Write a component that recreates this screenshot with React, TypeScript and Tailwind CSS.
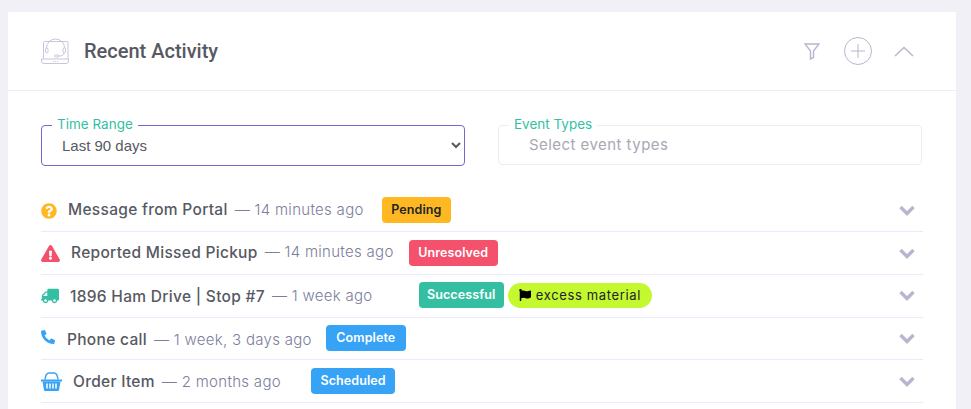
import { FaQuestionCircle, FaExclamationTriangle, FaTruck, FaPhoneAlt, FaFlag } from 'react-icons/fa'

const poppins = "font-['Inter',sans-serif]"

function HeadsetIcon() {
  return (
    <svg width="28" height="27" viewBox="0 0 28 27" fill="none" stroke="#c9c5dc" strokeWidth="1">
      <path d="M2.500 21V4.500a1 1 0 0 1 1-1H26a1 1 0 0 1 1 1V21" />
      <path d="M0.500 21H27.500V23a2.500 2.500 0 0 1-2.500 2.500H3A2.500 2.500 0 0 1 0.500 23Z" />
      <path d="M5.500 10V10a9 9 0 0 1 18 0V10" />
      <rect x="4.500" y="10" width="2.500" height="5" rx="1.200" />
      <rect x="22" y="10" width="2.500" height="5" rx="1.200" />
      <path d="M23 15c0 2-2 3-5 3" />
      <rect x="13.500" y="17" width="4.500" height="2" rx="1" />
      <path d="M12 23.500h1M14 23.500h1M16 23.500h1" />
    </svg>
  )
}

function FilterIcon() {
  return (
    <svg width="16" height="17" viewBox="0 0 16 17" fill="none" stroke="#b9b5d0" strokeWidth="1.400">
      <path d="M1 1H15L9.500 8V14.500L6.500 16V8Z" />
    </svg>
  )
}

function PlusCircleIcon() {
  return (
    <svg width="28" height="28" viewBox="0 0 28 28" fill="none" stroke="#b9b5d0" strokeWidth="1">
      <circle cx="14" cy="14" r="13.500" />
      <path d="M14 7V21M7 14H21" />
    </svg>
  )
}

function CaretUpIcon() {
  return (
    <svg width="20" height="11" viewBox="0 0 20 11" fill="none" stroke="#b9b5d0" strokeWidth="1.400">
      <path d="M1 10L10 1.500L19 10" />
    </svg>
  )
}

function RowChevron() {
  return (
    <svg width="16" height="11" viewBox="0 0 16 11" fill="none" stroke="#b9b5d0" strokeWidth="3.400">
      <path d="M1.500 2L8 8.500L14.500 2" />
    </svg>
  )
}

function BasketIcon() {
  return (
    <svg width="21" height="19" viewBox="0 0 21 19" fill="#36a3f7">
      <path d="M0 7.500H21V9.500H0Z" />
      <path d="M1.500 9.500H19.500L18 18a1 1 0 0 1-1 1H4a1 1 0 0 1-1-1Z" />
      <path d="M4 7.500C4.500 3 6 1 8 1H13C15 1 16.500 3 17 7.500" fill="none" stroke="#36a3f7" strokeWidth="1.500" />
      <path d="M6 11.500V16.500M9 11.500V16.500M12 11.500V16.500M15 11.500V16.500" stroke="#fff" strokeWidth="1.500" />
    </svg>
  )
}

type Row = {
  icon: React.ReactNode
  title: string
  time: string
  badge: string
  badgeClass: string
  titleGap: string
  badgeGap: string
  textShift: string
  flag?: boolean
}

const rows: Row[] = [
  {
    icon: <FaQuestionCircle size={16} color="#ffb822" />,
    title: 'Message from Portal',
    time: '14 minutes ago',
    badge: 'Pending',
    badgeClass: 'bg-[#ffb822] text-[#212529] px-[9.500px]',
    titleGap: 'ml-[11px]',
    badgeGap: 'ml-[18px]',
    textShift: '-mt-px',
  },
  {
    icon: <FaExclamationTriangle size={19} color="#f4516c" />,
    title: 'Reported Missed Pickup',
    time: '14 minutes ago',
    badge: 'Unresolved',
    badgeClass: 'bg-[#f4516c] text-white px-[9.500px]',
    titleGap: 'ml-[11px]',
    badgeGap: 'ml-[15px]',
    textShift: '-mt-px',
  },
  {
    icon: <FaTruck size={18} color="#34bfa3" className="-scale-x-100" />,
    title: '1896 Ham Drive | Stop #7',
    time: '1 week ago',
    badge: 'Successful',
    badgeClass: 'bg-[#34bfa3] text-white px-[8.500px]',
    titleGap: 'ml-[11px]',
    badgeGap: 'ml-[46px]',
    textShift: 'mt-px',
    flag: true,
  },
  {
    icon: <FaPhoneAlt size={14} color="#36a3f7" className="-mt-1" />,
    title: 'Phone call',
    time: '1 week, 3 days ago',
    badge: 'Complete',
    badgeClass: 'bg-[#36a3f7] text-white px-[10.500px]',
    titleGap: 'ml-[12px]',
    badgeGap: 'ml-[14px]',
    textShift: 'mt-[3px]',
  },
  {
    icon: <BasketIcon />,
    title: 'Order Item',
    time: '2 months ago',
    badge: 'Scheduled',
    badgeClass: 'bg-[#36a3f7] text-white px-[9.500px]',
    titleGap: 'ml-[11px]',
    badgeGap: 'ml-[30px]',
    textShift: 'mt-px',
  },
]

export default function App() {
  return (
    <div className={`h-[409px] overflow-hidden bg-[#f0f0f6] pl-2 pr-[15px] pt-3 ${poppins}`}>
      <div className="h-[500px] bg-white">
        <div className="flex h-[79px] items-center justify-between border-b border-[#ebedf2] pl-[33px] pr-[42px]">
          <div className="flex items-center gap-[15px]">
            <HeadsetIcon />
            <h3 className="font-['Roboto',sans-serif] text-[20px] font-medium text-[#575962]">Recent Activity</h3>
          </div>
          <div className="flex items-center">
            <FilterIcon />
            <span className="ml-[24px]"><PlusCircleIcon /></span>
            <span className="ml-[22px]"><CaretUpIcon /></span>
          </div>
        </div>

        <div className="px-[33px] pt-[34px]">
          <div className="flex gap-[33px]">
            <div className="relative w-[424px]">
              <label className="absolute left-[11px] top-[-9px] bg-white px-[5px] text-[13.500px] leading-[17px] text-[#34bfa3]">
                Time Range
              </label>
              <select className="h-[41px] w-full rounded-[4px] border border-[#716aca] bg-white pl-[16px] pr-1 font-['Liberation_Sans',sans-serif] text-[15px] text-[#575962] outline-none">
                <option>Last 90 days</option>
              </select>
            </div>
            <div className="relative w-[424px]">
              <label className="absolute left-[11px] top-[-9px] bg-white px-[5px] text-[13.500px] leading-[17px] text-[#34bfa3]">
                Event Types
              </label>
              <div className="flex h-[40px] items-center rounded-[4px] border border-[#ebedf2] pl-[30px] pt-px text-[15px] tracking-[0.45px] text-[#a8a8b3]">
                Select event types
              </div>
            </div>
          </div>

          <div className="mt-[23.700px]">
            {rows.map((row) => (
              <div key={row.title} className="flex h-[42.700px] items-center border-b border-[#ebe9fb]">
                <span className="flex items-center">{row.icon}</span>
                <span className={`${row.titleGap} ${row.textShift} text-[15.500px] font-medium tracking-[0.3px] text-[#575962]`}>{row.title}</span>
                <span className={`${row.textShift} ml-[7px] text-[15px] font-light tracking-[0.3px] text-[#7b7e9c]`}>— {row.time}</span>
                <span className={`${row.badgeGap} -mt-px rounded-[4px] py-[5px] text-[12.500px] leading-[16px] font-semibold tracking-[0.1px] ${row.badgeClass}`}>
                  {row.badge}
                </span>
                {row.flag && (
                  <span className="-mt-px ml-[4px] flex h-[25px] items-center gap-[5px] rounded-full bg-[#c4f82f] px-[11px] text-[13px] tracking-[0.65px] text-[#212529]">
                    <FaFlag size={12} color="#000" />
                    excess material
                  </span>
                )}
                <span className="ml-auto mr-[8px] flex items-center">
                  <RowChevron />
                </span>
              </div>
            ))}
          </div>
        </div>
      </div>
    </div>
  )
}
